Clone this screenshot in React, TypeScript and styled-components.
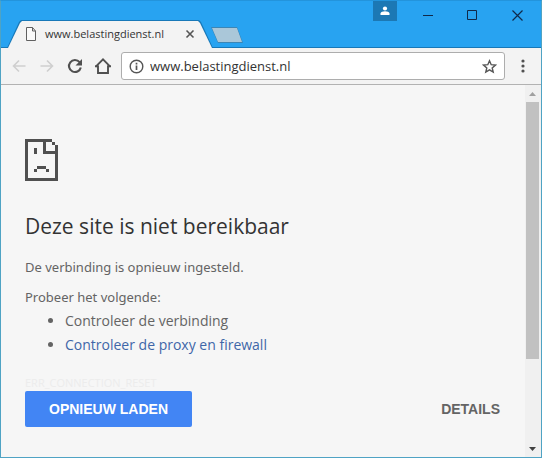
import React from "react";
import styled, { createGlobalStyle } from "styled-components";

const sans = `"Open Sans", "Noto Sans", sans-serif`;

const GlobalStyle = createGlobalStyle`
  *, *::before, *::after { box-sizing: border-box; }
  html, body { margin: 0; height: 100%; }
  #root { height: 100%; }
  body { font-family: ${sans}; background: #f6f6f6; }
  button { padding: 0; border: 0; background: none; font: inherit; color: inherit; cursor: pointer; }
  svg { display: block; }
`;

const Window = styled.div`
  display: flex;
  flex-direction: column;
  height: 100vh;
  border: 1px solid #4fa3c4;
  border-top-color: #2394dc;
  background: #f6f6f6;
`;

const TitleBar = styled.header`
  display: flex;
  flex: none;
  height: 47px;
  padding-left: 6px;
  background: #28a3f1;
  border-bottom: 1px solid #1878b8;
`;

const Tab = styled.div`
  position: relative;
  display: flex;
  align-items: center;
  align-self: flex-end;
  width: 206px;
  height: 28px;
  margin-bottom: -1px;
  padding: 0 18px;
  isolation: isolate;

  &::before,
  &::after {
    content: "";
    position: absolute;
    inset: 0;
    z-index: -1;
    background: #1878b8;
    clip-path: polygon(0 100%, 12px 2px, 14px 0, calc(100% - 14px) 0, calc(100% - 12px) 2px, 100% 100%);
  }

  &::after {
    inset: 1px 1px 0;
    background: #f3f3f3;
  }
`;

const TabTitle = styled.span`
  flex: 1;
  margin-left: 8px;
  font-size: 11px;
  line-height: 16px;
  color: #333;
  white-space: nowrap;
`;

const NewTab = styled.button`
  position: relative;
  width: 32px;
  height: 16px;
  margin-top: 26px;
  margin-left: -2px;
  background: #3d86b5;
  clip-path: polygon(0 0, 26px 0, 100% 100%, 7px 100%);

  &::after {
    content: "";
    position: absolute;
    inset: 1px;
    background: #aac7d9;
    clip-path: polygon(0 0, 25px 0, 100% 100%, 6px 100%);
  }
`;

const WindowControls = styled.div`
  display: flex;
  align-items: flex-start;
  margin-left: auto;
  padding-right: 1px;
`;

const ProfileButton = styled.button`
  display: grid;
  place-items: center;
  width: 24px;
  height: 20px;
  margin-right: 8px;
  background: #1c78b4;
`;

const ControlButton = styled.button`
  display: grid;
  place-items: center;
  width: 45px;
  height: 28px;
`;

const Toolbar = styled.nav`
  display: flex;
  flex: none;
  align-items: center;
  height: 37px;
  padding: 0 4px;
  background: #f3f3f3;
  border-bottom: 1px solid #b2b2b2;
`;

const ToolButton = styled.button<{ $muted?: boolean }>`
  display: grid;
  place-items: center;
  width: 28px;
  height: 28px;
  color: ${(p) => (p.$muted ? "#cfcfcf" : "#505050")};
`;

const MenuButton = styled(ToolButton)`
  margin-left: 4px;
`;

const AddressBar = styled.div`
  display: flex;
  flex: 1;
  align-items: center;
  min-width: 0;
  height: 28px;
  margin-left: 4px;
  padding: 0 7px;
  background: #fff;
  border: 1px solid #adadad;
  border-radius: 3px;
`;

const AddressInput = styled.input`
  flex: 1;
  min-width: 0;
  margin: 0 6px;
  padding: 0;
  border: 0;
  outline: 0;
  background: transparent;
  font-family: ${sans};
  font-size: 13px;
  line-height: 20px;
  color: #333;
`;

const BareButton = styled.button`
  color: #555;
`;

const Viewport = styled.div`
  display: flex;
  flex: 1;
  min-height: 0;
`;

const Page = styled.main`
  display: flex;
  flex: 1;
  flex-direction: column;
  min-width: 0;
  padding: 0 24px 30px;
`;

const Message = styled.section`
  flex: 1;
  padding-top: 54px;
  color: #646464;
`;

const Heading = styled.h1`
  margin: 29px 0 0;
  font-size: 21px;
  font-weight: 400;
  line-height: 32px;
  color: #333;
`;

const Paragraph = styled.p`
  margin: 16px 0 0;
  font-family: "Noto Sans", "Open Sans", sans-serif;
  font-size: 13px;
  line-height: 18px;
`;

const Prompt = styled(Paragraph)`
  margin-top: 12px;
`;

const Suggestions = styled.ul`
  margin: 3px 0 0;
  padding-left: 40px;
  font-size: 14px;
  line-height: 24px;
`;

const SuggestionLink = styled.a`
  color: #3f66a8;
  text-decoration: none;
`;

const ErrorCode = styled.p`
  margin: 18px 0 0;
  font-size: 11px;
  line-height: 16px;
  color: #ececec;
`;

const Actions = styled.footer`
  display: flex;
  flex: none;
  align-items: center;
  justify-content: space-between;
`;

const ActionButton = styled.button<{ $primary?: boolean }>`
  height: 36px;
  padding: 0 ${(p) => (p.$primary ? 24 : 1)}px;
  border-radius: 2px;
  background: ${(p) => (p.$primary ? "#4285f4" : "transparent")};
  color: ${(p) => (p.$primary ? "#fff" : "#646464")};
  font-family: "Liberation Sans", Arial, sans-serif;
  font-size: 14px;
  font-weight: 700;
  text-transform: uppercase;
`;

const ScrollBar = styled.div`
  display: flex;
  flex: none;
  flex-direction: column;
  width: 16px;
  padding: 0 2px 0 1px;
  background: #f0f0f0;
`;

const ScrollArrow = styled.button`
  display: grid;
  flex: none;
  place-items: center;
  height: 17px;
`;

const ScrollTrack = styled.div`
  flex: 1;
  min-height: 0;
`;

const ScrollThumb = styled.div`
  height: 76%;
  background: #c1c1c1;
`;

const SadPage = () => (
  <svg width="33" height="42" viewBox="0 0 11 14" fill="#505050" shapeRendering="crispEdges" aria-hidden="true">
    <path d="M0 0h9v1H7v3h4v10H0zM1 1v12h9V5H6V1z" fillRule="evenodd" />
    <path d="M9 1h1v1H9zM10 2h1v3h-1zM3 3h1v2H3zM4 9h3v1H4zM3 10h1v1H3zM7 10h1v1H7z" />
  </svg>
);

export default function App() {
  return (
    <>
      <GlobalStyle />
      <Window>
        <TitleBar>
          <Tab>
            <svg width="12" height="14" viewBox="0 0 12 14" fill="#fafafa" stroke="#606060" aria-hidden="true">
              <path d="M1.5.5h6l3 3.5v9.5h-9zM7.5.5V4h3" />
            </svg>
            <TabTitle>www.belastingdienst.nl</TabTitle>
            <BareButton aria-label="Tabblad sluiten">
              <svg width="10" height="10" viewBox="0 0 10 10" stroke="#555" strokeWidth="1.6">
                <path d="M1.5 1.5l7 7M8.5 1.5l-7 7" />
              </svg>
            </BareButton>
          </Tab>
          <NewTab aria-label="Nieuw tabblad" />
          <WindowControls>
            <ProfileButton aria-label="Profiel">
              <svg width="10" height="10" viewBox="0 0 10 10" fill="#fff">
                <circle cx="5" cy="2.5" r="2.1" />
                <path d="M.5 9V7.5C.5 6 3 5.2 5 5.2S9.5 6 9.5 7.5V9z" />
              </svg>
            </ProfileButton>
            <ControlButton aria-label="Minimaliseren">
              <svg width="10" height="10" viewBox="0 0 10 10" stroke="#10294a">
                <path d="M0 5.5h10" />
              </svg>
            </ControlButton>
            <ControlButton aria-label="Maximaliseren">
              <svg width="11" height="11" viewBox="0 0 11 11" fill="none" stroke="#10294a">
                <path d="M.5.5h9v9h-9z" />
              </svg>
            </ControlButton>
            <ControlButton aria-label="Sluiten">
              <svg width="11" height="11" viewBox="0 0 11 11" stroke="#10294a" strokeWidth="1.2">
                <path d="M.5.5l10 10M10.5.5l-10 10" />
              </svg>
            </ControlButton>
          </WindowControls>
        </TitleBar>

        <Toolbar>
          <ToolButton $muted aria-label="Vorige">
            <svg width="16" height="16" viewBox="0 0 16 16" fill="none" stroke="currentColor" strokeWidth="1.6">
              <path d="M14.5 8H3M8 2.5L2.5 8 8 13.5" />
            </svg>
          </ToolButton>
          <ToolButton $muted aria-label="Volgende">
            <svg width="16" height="16" viewBox="0 0 16 16" fill="none" stroke="currentColor" strokeWidth="1.6">
              <path d="M1.5 8H13M8 2.5L13.5 8 8 13.5" />
            </svg>
          </ToolButton>
          <ToolButton aria-label="Opnieuw laden">
            <svg width="16" height="16" viewBox="0 0 16 16" fill="none" stroke="currentColor" strokeWidth="2.1">
              <path d="M12.6 4.2A6 6 0 1 0 13.8 9.500" />
              <path d="M15 1v6.5H8.5z" fill="currentColor" stroke="none" />
            </svg>
          </ToolButton>
          <ToolButton aria-label="Startpagina">
            <svg width="18" height="18" viewBox="0 0 18 18" fill="none" stroke="currentColor" strokeWidth="1.9">
              <path d="M1.5 9.800L9 2.300l7.500 7.500M4 8.500V16h10V8.500M1 9.200h3.500M13.500 9.200H17" />
            </svg>
          </ToolButton>
          <AddressBar>
            <BareButton aria-label="Websitegegevens">
              <svg width="15" height="15" viewBox="0 0 15 15" fill="none" stroke="currentColor" strokeWidth="1.4">
                <circle cx="7.5" cy="7.5" r="6.3" />
                <path d="M7.5 6.5V11M7.5 3.8v1.6" strokeWidth="1.7" />
              </svg>
            </BareButton>
            <AddressInput aria-label="Adres" defaultValue="www.belastingdienst.nl" spellCheck={false} />
            <BareButton aria-label="Bladwijzer toevoegen">
              <svg width="15" height="15" viewBox="0 0 15 15" fill="none" stroke="currentColor" strokeWidth="1.4">
                <path d="M7.5 1.8l1.7 3.900 4.200.4-3.200 2.800 1 4.200-3.700-2.200-3.700 2.200 1-4.200L1.600 6.100l4.200-.4z" />
              </svg>
            </BareButton>
          </AddressBar>
          <MenuButton aria-label="Menu">
            <svg width="4" height="14" viewBox="0 0 4 14" fill="currentColor">
              <circle cx="2" cy="2" r="1.6" />
              <circle cx="2" cy="7" r="1.6" />
              <circle cx="2" cy="12" r="1.6" />
            </svg>
          </MenuButton>
        </Toolbar>

        <Viewport>
          <Page>
            <Message>
              <SadPage />
              <Heading>Deze site is niet bereikbaar</Heading>
              <Paragraph>De verbinding is opnieuw ingesteld.</Paragraph>
              <Prompt>Probeer het volgende:</Prompt>
              <Suggestions>
                <li>Controleer de verbinding</li>
                <li>
                  <SuggestionLink href="#proxy">Controleer de proxy en firewall</SuggestionLink>
                </li>
              </Suggestions>
              <ErrorCode>ERR_CONNECTION_RESET</ErrorCode>
            </Message>
            <Actions>
              <ActionButton $primary>Opnieuw laden</ActionButton>
              <ActionButton>Details</ActionButton>
            </Actions>
          </Page>
          <ScrollBar>
            <ScrollArrow aria-label="Omhoog schuiven">
              <svg width="7" height="4" viewBox="0 0 7 4" fill="#a0a0a0">
                <path d="M0 4L3.5 0 7 4z" />
              </svg>
            </ScrollArrow>
            <ScrollTrack>
              <ScrollThumb />
            </ScrollTrack>
            <ScrollArrow aria-label="Omlaag schuiven">
              <svg width="7" height="4" viewBox="0 0 7 4" fill="#404040">
                <path d="M0 0h7L3.5 4z" />
              </svg>
            </ScrollArrow>
          </ScrollBar>
        </Viewport>
      </Window>
    </>
  );
}
